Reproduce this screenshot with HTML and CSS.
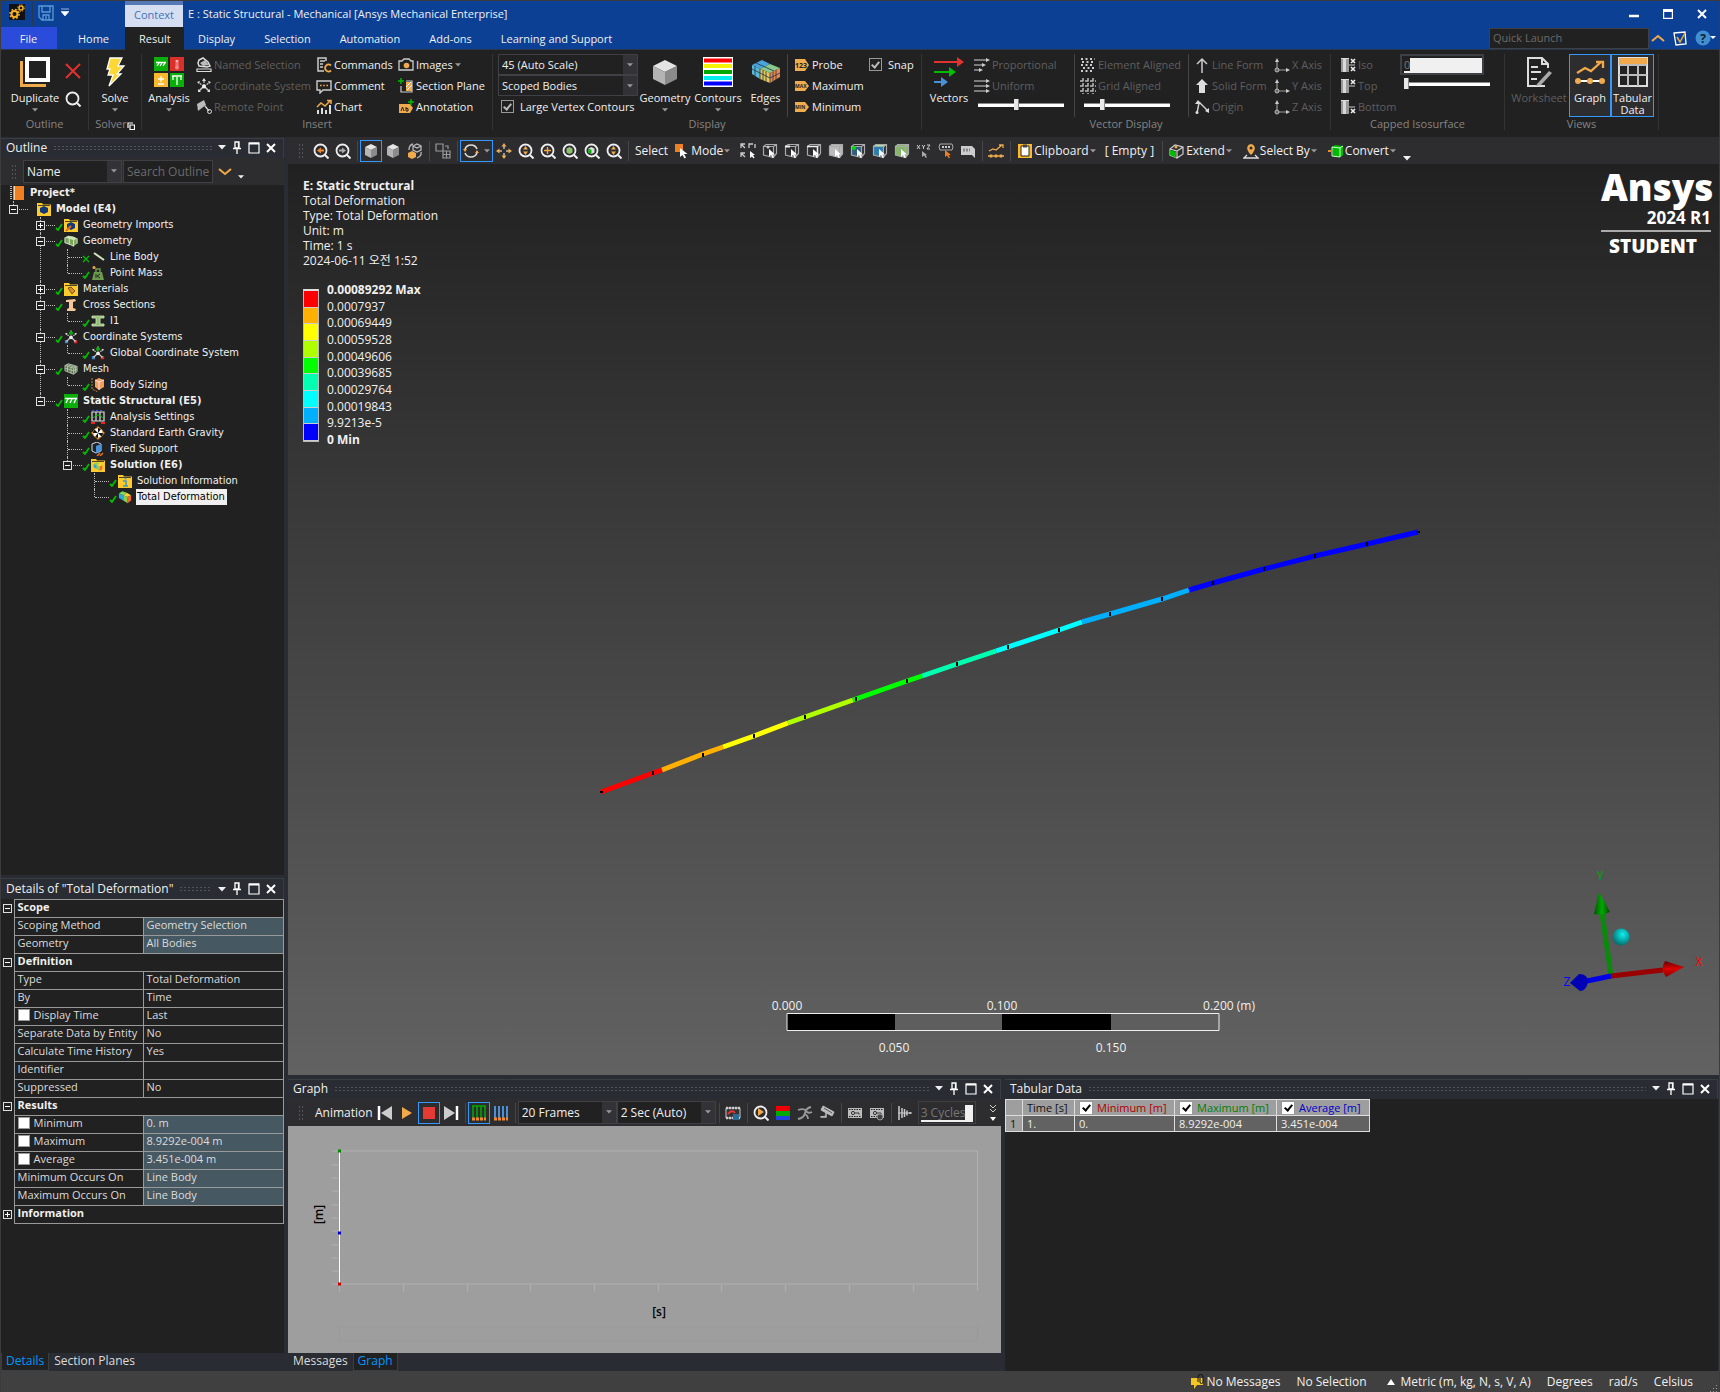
FILE: index.html
```html
<!DOCTYPE html>
<html lang="en">
<head>
    <meta charset="UTF-8">
    <meta name="viewport" content="width=device-width, initial-scale=1.0">
    <title>E : Static Structural - Mechanical [Ansys Mechanical Enterprise]</title>
    <link rel="stylesheet" href="styles.css">
</head>
<body>

    <!-- Shared icons -->
    <svg class="defs" aria-hidden="true">
        <symbol id="down" viewBox="0 0 8 5"><path d="M0 0h8L4 4.5z" fill="currentColor"/></symbol>
        <symbol id="pin" viewBox="0 0 10 14"><path d="M3 1h4v6H3zM1 7.5h8M5 8v5M6.500 1v6" fill="none" stroke="#fff" stroke-width="1.3"/></symbol>
        <symbol id="box" viewBox="0 0 12 12"><path d="M1 1h10v10H1z" fill="none" stroke="#fff" stroke-width="1.2"/><path d="M1 1.5h10" stroke="#fff" stroke-width="2"/></symbol>
        <symbol id="close" viewBox="0 0 10 10"><path d="M1 1l8 8M9 1L1 9" stroke="#fff" stroke-width="2"/></symbol>
        <symbol id="tick" viewBox="0 0 8 8"><path d="M1 5l2 2 4-6" fill="none" stroke="#0b0" stroke-width="1.8"/></symbol>
        <symbol id="lens" viewBox="0 0 16 16"><circle cx="7.5" cy="7.5" r="6" fill="none" stroke="#eee" stroke-width="1.8"/><path d="M12 12l3.500 3.500" stroke="#eee" stroke-width="2"/></symbol>
        <symbol id="cube" viewBox="0 0 16 16"><path d="M8 1l6 3-6 3-6-3z" fill="#e6e6e6"/><path d="M2 4l6 3v8l-6-3z" fill="#b5b5b5"/><path d="M14 4L8 7v8l6-3z" fill="#8b8b8b"/></symbol>
        <symbol id="wire" viewBox="0 0 16 16"><path d="M1.500 3.500L4 1.500h10.500v9L11.500 14M1.500 3.500h10v11L1.500 12zM11.500 3.500l3-2" fill="none" stroke="#aaa" stroke-width="1.2"/></symbol>
        <symbol id="arrow" viewBox="0 0 16 16"><path d="M7 6v8l2-2 1.500 3 1.300-.6L10.500 11.500H13z" fill="#fff"/></symbol>
        <symbol id="folder" viewBox="0 0 14 14"><path d="M0 1h5l1 1.500h8V14H0z" fill="#fdcb2e"/><path d="M1 3.500h12" stroke="#222" stroke-width=".8"/></symbol>
        <symbol id="axes" viewBox="0 0 16 16"><path d="M8 8V2M8 8L3 5M8 8l5-3" stroke="#ccc" stroke-width="1.2" stroke-dasharray="2 1"/><path d="M8 8l-5 5M8 8l5 5" stroke="#ccc" stroke-width="1.5"/><path d="M8 0l2 3H6zM1 4l3-1-1 3zM15 4l-3-1 1 3zM2 11v3h3zM14 11v3h-3z" fill="#ddd"/><circle cx="8" cy="8.500" r="2" fill="#eee"/></symbol>
        <symbol id="axis" viewBox="0 0 16 16"><path d="M3 13V3M3 13h10" stroke="#999" stroke-width="1.2"/><path d="M1 5l2-4 2 4zM12 11l4 2-4 2z" fill="#ccc"/><circle cx="3" cy="13" r="2" fill="#666" stroke="#bbb"/></symbol>
        <symbol id="iso" viewBox="0 0 16 16"><path d="M1 1h8v14H1z" fill="#999"/><path d="M3 1h3v14H3z" fill="#d8d8d8"/><path d="M1 1.500h8" stroke="#ddd"/><path d="M9 8h6" stroke="#ccc"/></symbol>
        <symbol id="cross" viewBox="0 0 6 6"><path d="M1 1l4 4M5 1L1 5" stroke="#eee" stroke-width="1.6"/></symbol>
        <symbol id="film" viewBox="0 0 16 16"><path d="M1 3h14v10H1z" fill="#bdbdbd"/><path d="M2 4.500h12M2 11.500h12" stroke="#222" stroke-width="1.2" stroke-dasharray="1.5 1"/><circle cx="6" cy="8" r="1.6" fill="none" stroke="#333"/><path d="M7.500 8H12v1.500" stroke="#333" fill="none"/></symbol>
        <symbol id="blocks" viewBox="0 0 16 14"><path d="M5 1l6 1 4 2v6l-4 3-4-2-6-2V3z" fill="#7aa35c"/><path d="M1 3l4-2 6 1 4 2-4 2-6-2z" fill="#cde3b8"/><path d="M1 3v6l6 2 4 2V6M6 4v7M15 4v6" stroke="#e5f0dc" fill="none"/></symbol>
        <symbol id="rainbow" viewBox="0 0 16 14"><path d="M1 3l4-2.500 5 1.500-4 3z" fill="#7bdc5a"/><path d="M1 3l5 2v6l-5-3z" fill="#2ea8d8"/><path d="M6 5l4-3 5 3-4 2z" fill="#f5d33b"/><path d="M6 5l5 2v7l-5-3z" fill="#8bd04b"/><path d="M11 7l4-2v6l-4 3z" fill="#ee6a2c"/></symbol>
    </svg>

    <!-- Title bar -->
    <header class="titlebar">
        <svg class="app-icon" viewBox="0 0 16 16"><path d="M0 0h16v16H0z" fill="#111"/><circle cx="5.500" cy="10" r="3" fill="none" stroke="#f3b229" stroke-width="2"/><circle cx="5.500" cy="10" r="4.600" fill="none" stroke="#f3b229" stroke-width="1.5" stroke-dasharray="1.8 1.8"/><circle cx="12" cy="4" r="2" fill="none" stroke="#f3b229" stroke-width="1.5"/><circle cx="12" cy="4" r="3.300" fill="none" stroke="#f3b229" stroke-dasharray="1.3 1.3"/></svg>
        <button class="save" aria-label="Save"><svg width="16" height="16" viewBox="0 0 16 16"><path d="M1 1h14v14H4l-3-3zM4 1v6h8V1M5 15v-5h6v5M8 11v3" fill="none" stroke="#5b9bd9" stroke-width="1.3"/></svg></button>
        <button class="customize" aria-label="Customize"><svg width="8" height="8" viewBox="0 0 8 8"><path d="M0 1h8M0 3.500h8L4 8z" fill="#fff" stroke="#fff" stroke-width=".6"/></svg></button>
        <div class="context">Context</div>
        <div class="title">E : Static Structural - Mechanical [Ansys Mechanical Enterprise]</div>
        <div class="window-buttons">
            <button aria-label="Minimize"><svg width="10" height="12" viewBox="0 0 10 12"><path d="M0 8h10" stroke="#fff" stroke-width="2.5"/></svg></button>
            <button aria-label="Maximize"><svg width="10" height="10" viewBox="0 0 10 10"><path d="M.6 1h8.800v8.400H.6z" fill="none" stroke="#fff" stroke-width="1.2"/><path d="M0 1.500h10" stroke="#fff" stroke-width="3"/></svg></button>
            <button aria-label="Close"><svg width="10" height="10"><use href="#close"/></svg></button>
        </div>
    </header>

    <nav class="tabs">
        <a href="#" class="file">File</a>
        <a href="#" class="home">Home</a>
        <a href="#" class="active">Result</a>
        <a href="#">Display</a>
        <a href="#">Selection</a>
        <a href="#">Automation</a>
        <a href="#">Add-ons</a>
        <a href="#">Learning and Support</a>
        <div class="quick">
            <input type="text" placeholder="Quick Launch" aria-label="Quick Launch">
            <button aria-label="Collapse ribbon"><svg width="14" height="8" viewBox="0 0 14 8"><path d="M1 7l6-5 6 5" fill="none" stroke="#f0a94b" stroke-width="2"/></svg></button>
            <button aria-label="Options"><svg width="16" height="16" viewBox="0 0 16 16"><path d="M2 3l11-1 1 12-10 1z" fill="none" stroke="#fff" stroke-width="1.3"/><path d="M5 7l3 5 5-9" fill="none" stroke="#f0a94b" stroke-width="1.5"/></svg></button>
            <button aria-label="Help"><svg width="21" height="16" viewBox="0 0 21 16"><circle cx="8" cy="8" r="7.500" fill="#3f8fd2"/><text x="8" y="12.500" text-anchor="middle" class="help-mark">?</text><path d="M15 6h6l-3 3z" fill="#fff"/></svg></button>
        </div>
    </nav>

    <!-- Ribbon -->
    <section class="ribbon">
        <div class="group">
            <div class="group-body g-outline">
                <button class="big w60"><svg width="30" height="30" viewBox="0 0 30 30"><path d="M1.500 4v24.500H26" fill="none" stroke="#f0a94b" stroke-width="3"/><path d="M7 2h21v21H7z" fill="none" stroke="#fff" stroke-width="4"/></svg><span>Duplicate</span><svg class="caret"><use href="#down"/></svg></button>
                <div class="tall">
                    <button aria-label="Delete"><svg width="16" height="16" viewBox="0 0 16 16"><path d="M1 1l14 14M15 1L1 15" stroke="#e2322d" stroke-width="2"/></svg></button>
                    <button aria-label="Find"><svg width="16" height="16"><use href="#lens"/></svg></button>
                </div>
            </div>
            <div class="group-name">Outline</div>
        </div>
        <div class="group">
            <div class="group-body">
                <button class="big w52"><svg width="30" height="30" viewBox="0 0 30 30"><path d="M10 1h12l-4 8h6l-7 8h4L9 29l4-11H8l2-6H7z" fill="#fdd835" stroke="#fff" stroke-width="1.3"/></svg><span>Solve</span><svg class="caret"><use href="#down"/></svg></button>
            </div>
            <div class="group-name">Solver<svg class="launcher" viewBox="0 0 8 8"><path d="M1 6V1h5M3 3h4.500v4.500H3z" fill="none" stroke="#fff" stroke-width="1.2"/></svg></div>
        </div>
        <div class="group">
            <div class="group-body">
                <button class="big w54"><svg width="30" height="30" viewBox="0 0 30 30"><path d="M0 0h14v14H0zM16 16h14v14H16z" fill="#0aaf0a"/><path d="M16 0h14v14H16z" fill="#d9302a"/><path d="M0 16h14v14H0z" fill="#fbb92d"/><path d="M2 5.500h10M5 6L3 9M8 6L6 9M11 6L9 9M23 20v8M19 19v4M27 19v4M18 19h10M7 19v6M4 22h6M4 27h6" stroke="#fff" stroke-width="1.3"/><path d="M23 3v6" stroke="#fbb" stroke-width="2.6"/><path d="M23 5v5" stroke="#d9302a"/><circle cx="23" cy="10.500" r="2" fill="#e88"/></svg><span>Analysis</span><svg class="caret"><use href="#down"/></svg></button>
                <div class="col w120">
                    <button class="small" disabled><svg class="icon" viewBox="0 0 16 16"><path d="M3 3l4-2 5 4 2 4-3 1-8-1-1-3z" fill="none" stroke="#ddd" stroke-width="1.5"/><path d="M4 6l5-3 4 5-6 1z" fill="#bbb"/><path d="M1 12h14v2.500H1z" fill="none" stroke="#ddd" stroke-width="1.2"/></svg>Named Selection</button>
                    <button class="small" disabled><svg class="icon"><use href="#axes"/></svg>Coordinate System</button>
                    <button class="small" disabled><svg class="icon" viewBox="0 0 16 16"><path d="M1 5l7-4 2 5-8 6z" fill="#bbb"/><path d="M9 7l4 5" stroke="#ccc" stroke-width="1.5"/><circle cx="13.500" cy="12.500" r="2" fill="none" stroke="#ddd"/></svg>Remote Point</button>
                </div>
                <div class="col w82">
                    <button class="small"><svg class="icon" viewBox="0 0 16 16"><path d="M10 4V1H2v13h6M4 4h5M4 7h3M4 10h3" fill="none" stroke="#ccc" stroke-width="1.5"/><path d="M15 8.500a3.500 3.500 0 1 0 0 5" fill="none" stroke="#f0a94b" stroke-width="1.8"/></svg>Commands</button>
                    <button class="small"><svg class="icon" viewBox="0 0 16 16"><path d="M1 3h14v9H7l-3 3v-3H1z" fill="none" stroke="#ccc" stroke-width="1.4"/><path d="M4 7.500h9" stroke="#f0a94b" stroke-width="1.6" stroke-dasharray="1.6 1.6"/></svg>Comment</button>
                    <button class="small"><svg class="icon" viewBox="0 0 16 16"><path d="M2 15v-4M6 15V9M10 15v-4M14 15V6" stroke="#ddd" stroke-width="2"/><path d="M1 8l4-4 4 3 5-5M11 1.500h4V5" fill="none" stroke="#f0a94b" stroke-width="1.5"/></svg>Chart</button>
                </div>
                <div class="col w94">
                    <button class="small"><svg class="icon" viewBox="0 0 16 16"><path d="M1 4h3l2-2h5l2 2h2v9H1z" fill="none" stroke="#ccc" stroke-width="1.3"/><circle cx="8.500" cy="8.500" r="2.800" fill="#f0a94b"/></svg>Images<svg class="caret"><use href="#down"/></svg></button>
                    <button class="small"><svg class="icon" viewBox="0 0 16 16"><path d="M3 0v6M0 3h6" stroke="#0b0" stroke-width="1.5"/><path d="M3 8v6h11V3H8" fill="none" stroke="#ccc" stroke-width="1.2"/><path d="M8 4h6v9H8z" fill="#f0a94b"/><path d="M8 9l5-5M9 12l5-5" stroke="#fff"/></svg>Section Plane</button>
                    <button class="small"><svg class="icon" viewBox="0 0 16 16"><path d="M1 5h11l3 4-3 5H1z" fill="#f0a94b"/><path d="M3 12l1.500-4L6 12M8 8v4h2V9.500H8" stroke="#222" fill="none"/><path d="M13 0v6M10 3h6" stroke="#0b0" stroke-width="1.5"/></svg>Annotation</button>
                </div>
            </div>
            <div class="group-name">Insert</div>
        </div>
        <div class="group">
            <div class="group-body g-display">
                <div class="col w140">
                    <div class="combo"><select aria-label="Scale"><option>45 (Auto Scale)</option></select><svg class="caret"><use href="#down"/></svg></div>
                    <div class="combo"><select aria-label="Scope"><option>Scoped Bodies</option></select><svg class="caret"><use href="#down"/></svg></div>
                    <label class="check"><input type="checkbox" checked>Large Vertex Contours</label>
                </div>
                <button class="big w52"><svg width="30" height="30" viewBox="0 0 30 30"><path d="M15 3l12 6-12 6L3 9z" fill="#e4e4e4"/><path d="M3 9l12 6v13L3 22z" fill="#b4b4b4"/><path d="M27 9l-12 6v13l12-6z" fill="#8a8a8a"/></svg><span>Geometry</span><svg class="caret"><use href="#down"/></svg></button>
                <button class="big w52"><svg width="30" height="30" viewBox="0 0 30 30"><path d="M0 0h30v30H0z" fill="#fff"/><path d="M1 1.500h28v4H1z" fill="#f00"/><path d="M1 7h28v4H1z" fill="#f4f400"/><path d="M1 13h28v4H1z" fill="#0a0"/><path d="M1 19h28v4H1z" fill="#0ee"/><path d="M1 24.500h28v4H1z" fill="#00f"/></svg><span>Contours</span><svg class="caret"><use href="#down"/></svg></button>
                <button class="big w41"><svg width="30" height="30" viewBox="0 0 30 30"><path d="M1 8l10-5 8 4-10 5z" fill="#4aa3dd"/><path d="M1 8l8 4v10l-8-5z" fill="#58b9d6"/><path d="M9 12l10-5 10 4-10 5z" fill="#8bc88c"/><path d="M9 12l10 4v10L9 22z" fill="#e5c95b"/><path d="M19 16l10-5v9l-10 6z" fill="#e88a4e"/><path d="M4 9v10M12 13v10M15 14.500v10M22 15v10M25 13v10M1 12l18 9 10-5M5 6l18 8M9 12v10M19 16v10" fill="none" stroke="#234" stroke-width=".8"/></svg><span>Edges</span><svg class="caret"><use href="#down"/></svg></button>
                <div class="inner-sep"></div>
                <div class="col w74">
                    <button class="small"><svg class="icon" viewBox="0 0 16 16"><path d="M1 2h10l4 6-4 6H1z" fill="#f0ad4e"/><text x="1" y="11" class="tag-text">123</text></svg>Probe</button>
                    <button class="small"><svg class="icon" viewBox="0 0 16 16"><path d="M1 3h10l4 5-4 5H1z" fill="#f0ad4e"/><text x="1" y="10" class="tag-text tiny">MAX</text></svg>Maximum</button>
                    <button class="small"><svg class="icon" viewBox="0 0 16 16"><path d="M1 3h10l4 5-4 5H1z" fill="#f0ad4e"/><text x="1" y="10" class="tag-text tiny">MIN</text></svg>Minimum</button>
                </div>
                <div class="col w48"><label class="check"><input type="checkbox" checked>Snap</label></div>
            </div>
            <div class="group-name">Display</div>
        </div>
        <div class="group">
            <div class="group-body g-vector">
                <button class="big w50"><svg width="30" height="30" viewBox="0 0 30 30"><path d="M0 5h24" stroke="#e2322d" stroke-width="2"/><path d="M23 0l7 5-7 5z" fill="#e2322d"/><path d="M0 15h16" stroke="#0b0" stroke-width="2"/><path d="M15 10l7 5-7 5z" fill="#0b0"/><path d="M0 25h8" stroke="#4a90d9" stroke-width="2"/><path d="M7 20l7 5-7 5z" fill="#4a90d9"/></svg><span>Vectors</span></button>
                <div class="col w100">
                    <button class="small" disabled><svg class="icon" viewBox="0 0 16 16"><path d="M0 3h13M0 8h9M0 13h6" stroke="#999" stroke-width="1.5"/><path d="M12 1l4 2-4 2zM8 6l4 2-4 2zM5 11l4 2-4 2z" fill="#ccc"/></svg>Proportional</button>
                    <button class="small" disabled><svg class="icon" viewBox="0 0 16 16"><path d="M0 3h13M0 8h13M0 13h13" stroke="#999" stroke-width="1.5"/><path d="M12 1l4 2-4 2zM12 6l4 2-4 2zM12 11l4 2-4 2z" fill="#ccc"/></svg>Uniform</button>
                    <input type="range" value="44" aria-label="Vector length">
                </div>
                <div class="inner-sep"></div>
                <div class="col w108">
                    <button class="small" disabled><svg class="icon" viewBox="0 0 16 16"><path d="M1 2h14M2 5h12M1 8h13M3 11h12M1 14h12" stroke="#ccc" stroke-width="2" stroke-dasharray="2 2.5"/></svg>Element Aligned</button>
                    <button class="small" disabled><svg class="icon" viewBox="0 0 16 16"><path d="M0 3h16M0 8h16M0 13h16M3 0v16M8 0v16M13 0v16" stroke="#bbb" stroke-width="1.5" stroke-dasharray="3.5 1.5"/></svg>Grid Aligned</button>
                    <input type="range" value="20" aria-label="Grid density">
                </div>
                <div class="inner-sep"></div>
                <div class="col w80">
                    <button class="small" disabled><svg class="icon" viewBox="0 0 16 16"><path d="M8 16V2M3 7l5-5 5 5" fill="none" stroke="#ccc" stroke-width="1.5"/></svg>Line Form</button>
                    <button class="small" disabled><svg class="icon" viewBox="0 0 16 16"><path d="M8 1l6 6h-3v8H5V7H2z" fill="#ddd"/></svg>Solid Form</button>
                    <button class="small" disabled><svg class="icon" viewBox="0 0 16 16"><path d="M3 14L5 4M5 3l8 8" stroke="#ccc" stroke-width="1.5"/><path d="M1 5l3-4 3 4zM11 12l4-3v5z" fill="#ddd"/><circle cx="3" cy="13.500" r="1.500" fill="#ddd"/></svg>Origin</button>
                </div>
                <div class="col w56">
                    <button class="small" disabled><svg class="icon"><use href="#axis"/></svg>X Axis</button>
                    <button class="small" disabled><svg class="icon"><use href="#axis"/></svg>Y Axis</button>
                    <button class="small" disabled><svg class="icon"><use href="#axis"/></svg>Z Axis</button>
                </div>
            </div>
            <div class="group-name">Vector Display</div>
        </div>
        <div class="group">
            <div class="group-body g-capped">
                <div class="col w60">
                    <button class="small" disabled><svg class="icon" viewBox="0 0 16 16"><use href="#iso" width="16" height="16"/><use href="#cross" x="10" y="1" width="6" height="6"/><use href="#cross" x="10" y="9" width="6" height="6"/></svg>Iso</button>
                    <button class="small" disabled><svg class="icon" viewBox="0 0 16 16"><use href="#iso" width="16" height="16"/><use href="#cross" x="10" y="1" width="6" height="6"/></svg>Top</button>
                    <button class="small" disabled><svg class="icon" viewBox="0 0 16 16"><use href="#iso" width="16" height="16"/><use href="#cross" x="10" y="9" width="6" height="6"/></svg>Bottom</button>
                </div>
                <div class="col w92">
                    <div class="iso-value"><input type="text" value="0" aria-label="Isosurface value"></div>
                    <input type="range" class="iso-range" value="0" aria-label="Isosurface position">
                </div>
            </div>
            <div class="group-name">Capped Isosurface</div>
        </div>
        <div class="group">
            <div class="group-body g-views">
                <button class="big w60 off" disabled><svg width="30" height="30" viewBox="0 0 30 30"><path d="M21 29H4V1h14l6 6v4M18 1v6h6M7 10h7M7 15h10M7 22h6" fill="none" stroke="#ddd" stroke-width="2"/><path d="M13 27l12-13 3 2-11 12-5 1z" fill="#aaa"/></svg><span>Worksheet</span></button>
                <button class="big w42 on"><svg width="30" height="30" viewBox="0 0 30 30"><path d="M2 16l8-5 6 3 10-9M21 5h7v6" fill="none" stroke="#f0a94b" stroke-width="2.3"/><path d="M3 24h24" stroke="#fff" stroke-width="2"/><circle cx="3" cy="24" r="3" fill="#f0a94b"/><circle cx="15" cy="24" r="3" fill="#f0a94b"/><circle cx="27" cy="24" r="3" fill="#f0a94b"/></svg><span>Graph</span></button>
                <button class="big w43 on"><svg width="30" height="30" viewBox="0 0 30 30"><path d="M1 1h28v28H1z" fill="#222" stroke="#ddd" stroke-width="2"/><path d="M1 1h28v6H1z" fill="#f0a94b"/><path d="M1 8h28M1 18h28M10 8v21M20 8v21" stroke="#bbb" stroke-width="2"/></svg><span>Tabular<br>Data</span></button>
            </div>
            <div class="group-name">Views</div>
        </div>
    </section>

    <main class="workspace">
        <!-- Left docks -->
        <aside class="left">
            <section class="dock tree-dock">
                <div class="dock-head"><h2>Outline</h2><i class="dots"></i><button aria-label="Menu"><svg width="8" height="5"><use href="#down"/></svg></button><button aria-label="Pin"><svg width="10" height="14"><use href="#pin"/></svg></button><button aria-label="Maximize"><svg width="12" height="12"><use href="#box"/></svg></button><button aria-label="Close"><svg width="10" height="10"><use href="#close"/></svg></button></div>
                <div class="filter">
                    <i class="grip"></i>
                    <div class="combo w99"><select aria-label="Filter by"><option>Name</option></select><svg class="caret"><use href="#down"/></svg></div>
                    <input type="text" placeholder="Search Outline" aria-label="Search Outline">
                    <button aria-label="Expand"><svg width="14" height="8" viewBox="0 0 14 8"><path d="M1 1l6 5 6-5" fill="none" stroke="#f0a94b" stroke-width="2"/></svg></button>
                    <button class="low" aria-label="More"><svg width="6" height="4"><use href="#down"/></svg></button>
                </div>
                <div class="tree">
                    <div class="project"><svg width="14" height="14" viewBox="0 0 14 14"><path d="M3 0h11v14H3z" fill="#ee7f22"/><path d="M4.500 0v14" stroke="#fbd0a0"/><path d="M1 0v14" stroke="#bbb" stroke-width="2" stroke-dasharray="1 1"/></svg><b>Project*</b></div>
                    <ul class="root">
                        <li><div class="row bold"><i class="exp minus"></i><i class="state"></i><svg class="ti" viewBox="0 0 14 14"><use href="#folder"/><path d="M7 4l4 2v4l-4 2-4-2V6z" fill="#123a7a"/></svg>Model (E4)</div>
                            <ul>
                                <li><div class="row"><i class="exp plus"></i><svg class="state"><use href="#tick"/></svg><svg class="ti" viewBox="0 0 14 14"><use href="#folder"/><path d="M7 4l4 2v4l-4 2-4-2V6z" fill="#123a7a"/><path d="M2 13l5-5" stroke="#e07020" stroke-width="2"/></svg>Geometry Imports</div></li>
                                <li><div class="row"><i class="exp minus"></i><svg class="state"><use href="#tick"/></svg><svg class="ti"><use href="#blocks"/></svg>Geometry</div>
                                    <ul>
                                        <li><div class="row leaf"><i class="exp"></i><svg class="state" viewBox="0 0 8 8"><path d="M1 1l6 6M7 1L1 7" stroke="#0b0" stroke-width="1.3"/></svg><svg class="ti" viewBox="0 0 14 14"><path d="M3 3l10 7" stroke="#cfe6c0" stroke-width="2"/></svg>Line Body</div></li>
                                        <li><div class="row leaf"><i class="exp"></i><svg class="state"><use href="#tick"/></svg><svg class="ti" viewBox="0 0 14 14"><path d="M3 6h8l2 8H1z" fill="#6c9a4f"/><path d="M5 6V3h4v3" stroke="#6c9a4f" stroke-width="1.5" fill="none"/><circle cx="3" cy="1.500" r="1.500" fill="#f0a94b"/><path d="M5 8v4M9 8l-3 2 3 2" stroke="#222" fill="none"/></svg>Point Mass</div></li>
                                    </ul>
                                </li>
                                <li><div class="row"><i class="exp plus"></i><svg class="state"><use href="#tick"/></svg><svg class="ti" viewBox="0 0 14 14"><use href="#folder"/><path d="M4 6l3-1 4 4-3 3z" fill="#e58a20" stroke="#222" stroke-width=".6"/></svg>Materials</div></li>
                                <li><div class="row"><i class="exp minus"></i><svg class="state"><use href="#tick"/></svg><svg class="ti" viewBox="0 0 14 14"><path d="M2 2l9-1 1 2-3 1v6l3 1-1 2H3v-2l2-1V4H2z" fill="#f3c79a"/></svg>Cross Sections</div>
                                    <ul><li><div class="row leaf"><i class="exp"></i><svg class="state"><use href="#tick"/></svg><svg class="ti" viewBox="0 0 14 14"><path d="M1 2h12v2H9v6h4v2H1v-2h4V4H1z" fill="#8fbf70" stroke="#d5eac5" stroke-width=".8"/></svg>I1</div></li></ul>
                                </li>
                                <li><div class="row"><i class="exp minus"></i><svg class="state"><use href="#tick"/></svg><svg class="ti" viewBox="0 0 16 16"><use href="#axes"/><path d="M8 0l3 5H5z" fill="#0a0"/><path d="M1 11v4h4z" fill="#3a8be0"/><path d="M15 11v4h-4z" fill="#e22"/></svg>Coordinate Systems</div>
                                    <ul><li><div class="row leaf"><i class="exp"></i><svg class="state"><use href="#tick"/></svg><svg class="ti" viewBox="0 0 16 16"><use href="#axes"/><path d="M8 0l3 5H5z" fill="#0a0"/><path d="M1 11v4h4z" fill="#3a8be0"/><path d="M15 11v4h-4z" fill="#e22"/></svg>Global Coordinate System</div></li></ul>
                                </li>
                                <li><div class="row"><i class="exp minus"></i><svg class="state"><use href="#tick"/></svg><svg class="ti" viewBox="0 0 16 14"><path d="M5 1l6 1 4 2v6l-4 3-10-4V3z" fill="#5b7350"/><path d="M1 3l4-2 10 3-4 2zM1 3v6l10 4V6M4 4v6M8 5v7M1 6l10 3 4-2M15 4v6l-4 3M3 2l10 3v6" fill="none" stroke="#cfd8c8" stroke-width=".8"/></svg>Mesh</div>
                                    <ul><li><div class="row leaf"><i class="exp"></i><svg class="state"><use href="#tick"/></svg><svg class="ti" viewBox="0 0 14 14"><path d="M8 0l5 2v7l-5 3-4-3V2z" fill="#f0a05a"/><path d="M4 2l4 2 5-2M8 4v8" stroke="#fde" fill="none"/><path d="M1 0v11l6 3" stroke="#c77b2c" fill="none" stroke-dasharray="2 1"/></svg>Body Sizing</div></li></ul>
                                </li>
                                <li><div class="row bold"><i class="exp minus"></i><svg class="state"><use href="#tick"/></svg><svg class="ti" viewBox="0 0 14 14"><path d="M0 0h14v14H0z" fill="#0aaf0a"/><path d="M1 4.500h12M4 5L2 9M8 5L6 9M12 5l-2 4" stroke="#fff" stroke-width="1.4"/></svg>Static Structural (E5)</div>
                                    <ul>
                                        <li><div class="row leaf"><i class="exp"></i><svg class="state"><use href="#tick"/></svg><svg class="ti" viewBox="0 0 14 14"><path d="M1 2h12v9H1zM5 2v9M9 2v9" fill="none" stroke="#ddd" stroke-width="1.2"/><path d="M1 0h12" stroke="#35f" stroke-dasharray="2 2" stroke-width="2"/><path d="M2 8q5-6 10 0" stroke="#0b0" fill="none"/><path d="M0 13h4M10 13h4" stroke="#e22" stroke-width="2"/></svg>Analysis Settings</div></li>
                                        <li><div class="row leaf"><i class="exp"></i><svg class="state"><use href="#tick"/></svg><svg class="ti" viewBox="0 0 14 14"><path d="M7 0l2 2.500H5zM7 14l2-2.500H5zM0 7l2.500-2v4zM14 7l-2.500-2v4z" fill="#e58a20"/><circle cx="7" cy="7" r="5" fill="#fff" stroke="#e58a20" stroke-width=".8"/><path d="M7 7L3.500 3.500A5 5 0 0 0 2 7zM7 7l3.500 3.500A5 5 0 0 0 12 7zM7 7V2l3 1zM7 7v5l-3-1z" fill="#111"/></svg>Standard Earth Gravity</div></li>
                                        <li><div class="row leaf"><i class="exp"></i><svg class="state"><use href="#tick"/></svg><svg class="ti" viewBox="0 0 14 14"><path d="M1 2l5-2 4 2v7l-5 2-4-2z" fill="#222" stroke="#cde"/><path d="M5 4l5-2v7l-5 2z" fill="#4a90d9"/><path d="M6 14l3-3M9 14l3-3" stroke="#e07020" stroke-width="1.5"/></svg>Fixed Support</div></li>
                                        <li><div class="row bold"><i class="exp minus"></i><svg class="state"><use href="#tick"/></svg><svg class="ti" viewBox="0 0 14 14"><use href="#folder"/><use href="#rainbow" x="2" y="4" width="10" height="9"/></svg>Solution (E6)</div>
                                            <ul>
                                                <li><div class="row leaf"><i class="exp"></i><svg class="state"><use href="#tick"/></svg><svg class="ti" viewBox="0 0 14 14"><use href="#folder"/><path d="M5 7h3v5M5 12h5M6.500 4.500h2" stroke="#3a9bd0" stroke-width="1.5" fill="none"/></svg>Solution Information</div></li>
                                                <li><div class="row leaf"><i class="exp"></i><svg class="state"><use href="#tick"/></svg><svg class="ti"><use href="#rainbow"/></svg><span class="selected">Total Deformation</span></div></li>
                                            </ul>
                                        </li>
                                    </ul>
                                </li>
                            </ul>
                        </li>
                    </ul>
                </div>
            </section>

            <section class="dock details-dock">
                <div class="dock-head"><h2>Details of "Total Deformation"</h2><i class="dots"></i><button aria-label="Menu"><svg width="8" height="5"><use href="#down"/></svg></button><button aria-label="Pin"><svg width="10" height="14"><use href="#pin"/></svg></button><button aria-label="Maximize"><svg width="12" height="12"><use href="#box"/></svg></button><button aria-label="Close"><svg width="10" height="10"><use href="#close"/></svg></button></div>
                <table class="details">
                    <colgroup><col class="c-gut"><col class="c-name"><col></colgroup>
                    <tr><td class="gut"><i class="exp minus"></i></td><th colspan="2">Scope</th></tr>
                    <tr><td class="gut"></td><td>Scoping Method</td><td class="ro">Geometry Selection</td></tr>
                    <tr><td class="gut"></td><td>Geometry</td><td class="ro">All Bodies</td></tr>
                    <tr><td class="gut"><i class="exp minus"></i></td><th colspan="2">Definition</th></tr>
                    <tr><td class="gut"></td><td>Type</td><td>Total Deformation</td></tr>
                    <tr><td class="gut"></td><td>By</td><td>Time</td></tr>
                    <tr><td class="gut"></td><td><label><input type="checkbox">Display Time</label></td><td>Last</td></tr>
                    <tr><td class="gut"></td><td>Separate Data by Entity</td><td>No</td></tr>
                    <tr><td class="gut"></td><td>Calculate Time History</td><td>Yes</td></tr>
                    <tr><td class="gut"></td><td>Identifier</td><td></td></tr>
                    <tr><td class="gut"></td><td>Suppressed</td><td>No</td></tr>
                    <tr><td class="gut"><i class="exp minus"></i></td><th colspan="2">Results</th></tr>
                    <tr><td class="gut"></td><td><label><input type="checkbox">Minimum</label></td><td class="ro">0. m</td></tr>
                    <tr><td class="gut"></td><td><label><input type="checkbox">Maximum</label></td><td class="ro">8.9292e-004 m</td></tr>
                    <tr><td class="gut"></td><td><label><input type="checkbox">Average</label></td><td class="ro">3.451e-004 m</td></tr>
                    <tr><td class="gut"></td><td>Minimum Occurs On</td><td class="ro">Line Body</td></tr>
                    <tr><td class="gut"></td><td>Maximum Occurs On</td><td class="ro">Line Body</td></tr>
                    <tr><td class="gut"><i class="exp plus"></i></td><th colspan="2">Information</th></tr>
                </table>
            </section>
            <nav class="dock-tabs"><a href="#" class="active">Details</a><a href="#">Section Planes</a></nav>
        </aside>

        <div class="right">
            <!-- Graphics toolbar -->
            <div class="toolbar">
                <i class="grip"></i>
                <button aria-label="Previous view"><svg class="icon" viewBox="0 0 16 16"><use href="#lens"/><path d="M4 7.500l4-3v2h3v2H8v2z" fill="#f08a2c"/></svg></button>
                <button aria-label="Next view"><svg class="icon" viewBox="0 0 16 16"><use href="#lens"/><path d="M11 7.500l-4-3v2H4v2h3v2z" fill="#aaa"/></svg></button>
                <i class="sep"></i>
                <button class="on" aria-label="Shaded edges"><svg class="icon"><use href="#cube"/></svg></button>
                <button aria-label="Shaded"><svg class="icon"><use href="#cube"/></svg></button>
                <button aria-label="Explode"><svg class="icon" viewBox="0 0 16 16"><path d="M6 3l4-2 4 2v4l-4 2-4-2zM6 3l4 2 4-2M2 7q0-5 4-6M14 9q1 4-4 6" fill="none" stroke="#bbb" stroke-width="1.3"/><path d="M1 10l4-2 4 2v4l-4 2-4-2z" fill="#f0a94b"/></svg></button>
                <i class="sep"></i>
                <button aria-label="Rescale"><svg class="icon" viewBox="0 0 16 16"><path d="M1 1h7v7H1zM8 8h7v7H8zM11.500 8v7M8 11.500h7M10 3h3v3" fill="none" stroke="#999" stroke-width="1.2"/></svg></button>
                <i class="sep"></i>
                <button class="on wide" aria-label="Rotate"><svg class="icon" viewBox="0 0 16 16"><path d="M2 6a6.500 6.500 0 0 1 12 0M14 10a6.500 6.500 0 0 1-12 0" fill="none" stroke="#ddd" stroke-width="1.6"/><path d="M0 6h4L2 9zM12 10h4l-2-3z" fill="#f0a94b"/></svg><svg class="caret"><use href="#down"/></svg></button>
                <button aria-label="Pan"><svg class="icon" viewBox="0 0 16 16"><path d="M8 3v3M8 10v3M3 8h3M10 8h3" stroke="#bbb" stroke-width="1.5"/><path d="M8 0l2.500 3.500h-5zM8 16l2.500-3.500h-5zM0 8l3.500-2.500v5zM16 8l-3.500-2.500v5z" fill="#f0a94b"/></svg></button>
                <button aria-label="Zoom"><svg class="icon" viewBox="0 0 16 16"><use href="#lens"/><path d="M7.500 3l2.500 3.500H5zM7.500 12L10 8.500H5z" fill="#f0a94b"/></svg></button>
                <button aria-label="Box zoom"><svg class="icon" viewBox="0 0 16 16"><use href="#lens"/><path d="M7.500 4v7M4 7.500h7" stroke="#f0a94b" stroke-width="1.5"/></svg></button>
                <button aria-label="Zoom to fit"><svg class="icon" viewBox="0 0 16 16"><use href="#lens"/><path d="M7.500 4l3 1.500v4l-3 1.500-3-1.500v-4z" fill="#8fbf70"/></svg></button>
                <button aria-label="Zoom to selection"><svg class="icon" viewBox="0 0 16 16"><use href="#lens"/><path d="M7.500 4l3 1.500v4l-3 1.500-3-1.500v-4z" fill="#ddd"/><path d="M4.500 5.500l3 1.500v4l-3-1.500z" fill="#0b0"/></svg></button>
                <button aria-label="Magnifier"><svg class="icon" viewBox="0 0 16 16"><use href="#lens"/><path d="M7.500 3L10 6.500H5zM7.500 12L10 8.500H5z" fill="#f0a94b"/></svg></button>
                <i class="sep"></i>
                <span class="label">Select</span>
                <button class="text"><svg class="icon" viewBox="0 0 16 16"><path d="M1 1h8v8H1z" fill="#ee7f22"/><path d="M6 5v9l2.500-2 2 3.500 1.500-1-2-3.500h3.500z" fill="#fff"/></svg>Mode<svg class="caret"><use href="#down"/></svg></button>
                <button aria-label="Smart select"><svg class="icon" viewBox="0 0 16 16"><path d="M1 5V1h4M1 1l4 4M9 5V1h4M15 1v4M1 14v-4h4M1 10l4 4" stroke="#ccc" stroke-width="1.3" fill="none"/><path d="M10 8v7l2-1.500 1.500 2 1-1L13 12h2z" fill="#fff"/></svg></button>
                <button aria-label="Vertex"><svg class="icon" viewBox="0 0 16 16"><use href="#wire"/><circle cx="6" cy="4" r="1.500" fill="#ccc"/><use href="#arrow"/></svg></button>
                <button aria-label="Edge"><svg class="icon" viewBox="0 0 16 16"><use href="#wire"/><path d="M1 3.500h5" stroke="#eee" stroke-width="2"/><use href="#arrow"/></svg></button>
                <button aria-label="Face"><svg class="icon" viewBox="0 0 16 16"><use href="#wire"/><path d="M1 3.500h10.500v10" stroke="#eee" stroke-width="1.5" fill="none"/><use href="#arrow"/></svg></button>
                <button aria-label="Body"><svg class="icon" viewBox="0 0 16 16"><path d="M1 3l3-2h11v10l-3 4-11-3z" fill="#bbb"/><use href="#wire"/><use href="#arrow"/></svg></button>
                <button aria-label="Node"><svg class="icon" viewBox="0 0 16 16"><path d="M2 4h9v9H2z" fill="#2f5d83"/><use href="#wire"/><circle cx="4" cy="5" r="2" fill="#0d0"/><use href="#arrow"/></svg></button>
                <button aria-label="Element face"><svg class="icon" viewBox="0 0 16 16"><path d="M2 4h9v10l-9-2z" fill="#2b7fb0"/><path d="M1 3l3-2h11l-3 3z" fill="#a6e0a8"/><use href="#wire"/><use href="#arrow"/></svg></button>
                <button aria-label="Element"><svg class="icon" viewBox="0 0 16 16"><path d="M1 3l3-2h11v10l-3 4-11-3z" fill="#85b56a"/><use href="#wire"/><use href="#arrow"/></svg></button>
                <button aria-label="Coordinates"><svg class="icon" viewBox="0 0 16 16"><path d="M1 2l3 4M4 2L1 6M6 2l1.500 2L9 2M7.500 4v2M11 2h3l-3 4h3" stroke="#ccc" fill="none"/><path d="M6 8v6l2-1.500L10 15l1-1-1.500-2H11z" fill="#aaa"/></svg></button>
                <button aria-label="Probe label"><svg class="icon" viewBox="0 0 16 16"><path d="M2 1h12l1 3-1 3H2L1 4z" fill="none" stroke="#aaa"/><path d="M4 4h8" stroke="#ccc" stroke-dasharray="2 1" stroke-width="2"/><path d="M7 7v7l2-1.500 2 3 1-1-1.500-2.500H13z" fill="#ee7f22"/></svg></button>
                <button aria-label="Label"><svg class="icon" viewBox="0 0 16 16"><path d="M1 3h11l3 3v9l-3-3H1z" fill="#ccc"/><path d="M3 7h7" stroke="#888" stroke-width="3" stroke-dasharray="2 1"/></svg></button>
                <i class="sep"></i>
                <button aria-label="Graph"><svg class="icon" viewBox="0 0 16 16"><path d="M1 8l4-2 3 1 6-5M11 2h4v3M0 13h16" fill="none" stroke="#f0a94b" stroke-width="1.3"/><path d="M3 11.500v3M8 11.500v3M13 11.500v3" stroke="#f0a94b" stroke-width="2.5"/></svg></button>
                <i class="sep"></i>
                <button class="text"><svg class="icon" viewBox="0 0 16 16"><path d="M1 1h14v14H1z" fill="#fbb92d"/><path d="M4 3h8v10H4z" fill="#fff" stroke="#222"/><path d="M6 1.500h4v3H6z" fill="#444"/></svg>Clipboard<svg class="caret"><use href="#down"/></svg></button>
                <span class="label empty">[ Empty ]</span>
                <i class="sep"></i>
                <button class="text"><svg class="icon" viewBox="0 0 16 16"><path d="M1 6l5-4 8 2v7l-6 4-7-3zM1 6l7 2 6-4M8 8v7" fill="none" stroke="#ccc" stroke-width="1.2"/><path d="M1 7l6 2v6l-6-3z" fill="#0b0"/><circle cx="7" cy="4" r="1.500" fill="#f0a94b"/></svg>Extend<svg class="caret"><use href="#down"/></svg></button>
                <button class="text"><svg class="icon" viewBox="0 0 16 16"><path d="M8 12Q3 7 4.500 3.500a3.700 3.700 0 0 1 7 0Q13 7 8 12z" fill="#f0a94b"/><circle cx="8" cy="5" r="1.500" fill="#2d2d30"/><path d="M4 12l-3 3h14l-3-3" fill="none" stroke="#ddd" stroke-width="1.3"/></svg>Select By<svg class="caret"><use href="#down"/></svg></button>
                <button class="text"><svg class="icon" viewBox="0 0 16 16"><path d="M0 8h3" stroke="#f08a2c" stroke-width="2"/><path d="M4 4l3-2 8 1v9l-2 2-8-1z" fill="#0b0"/><path d="M4 4l8 1 3-2M12 5v9M4 4v9l8 1" stroke="#cfc" fill="none"/></svg>Convert<svg class="caret"><use href="#down"/></svg></button>
                <button class="low" aria-label="More"><svg width="8" height="5"><use href="#down"/></svg></button>
            </div>

            <!-- Graphics view -->
            <section class="viewport">
                <svg class="scene" viewBox="0 0 1431 911">
                    <defs>
                        <radialGradient id="ball" cx=".6" cy=".35" r=".7"><stop offset="0" stop-color="#1ee"/><stop offset="1" stop-color="#066"/></radialGradient>
                        <linearGradient id="red" x2="0" y2="1"><stop offset="0" stop-color="#600"/><stop offset=".5" stop-color="#d00"/><stop offset="1" stop-color="#800"/></linearGradient>
                        <linearGradient id="green"><stop offset="0" stop-color="#050"/><stop offset=".5" stop-color="#0a0"/><stop offset="1" stop-color="#040"/></linearGradient>
                    </defs>
                    <g class="beam">
                        <path stroke="#f00" d="M313 628L365 609L374 606"/>
                        <path stroke="#ffb000" d="M374 606L415 590L435 583"/>
                        <path stroke="#ff0" d="M435 583L466 572L500 559"/>
                        <path stroke="#b0ff00" d="M500 559L517 553L565 536"/>
                        <path stroke="#0f0" d="M565 536L619 517L634 512"/>
                        <path stroke="#00ffb0" d="M634 512L669 500L708 487"/>
                        <path stroke="#0ff" d="M708 487L771 466L794 458"/>
                        <path stroke="#00b0ff" d="M794 458L822 450L874 435L901 426"/>
                        <path stroke="#00f" d="M901 426L925 419L976 405L1027 392L1079 380L1130 368"/>
                    </g>
                    <path class="nodes" d="M312 628h3M365 607v4M415 589v4M466 570v4M517 551v4M568 533v4M619 515v4M669 498v4M720 481v4M771 464v4M822 448v4M874 433v4M925 417v4M976 403v4M1027 390v4M1079 378v4M1129 368h3"/>
                    <!-- scale ruler -->
                    <path d="M499 849h108v17H499zM714 849h109v17H714z" fill="#000"/>
                    <path d="M499 849.500h432v17H499z" fill="none" stroke="#eee"/>
                    <g class="ruler-text">
                        <text x="499" y="846">0.000</text><text x="714" y="846">0.100</text><text x="941" y="846">0.200 (m)</text>
                        <text x="606" y="888">0.050</text><text x="823" y="888">0.150</text>
                    </g>
                    <!-- triad -->
                    <path d="M1314 749l9 63" stroke="#0a8a0a" stroke-width="5"/>
                    <path d="M1311 728l11 20q-8 4-16 2z" fill="url(#green)"/>
                    <path d="M1323 812l52-6" stroke="#900" stroke-width="5"/>
                    <path d="M1396 803l-19-6q-5 8 1 16z" fill="url(#red)"/>
                    <path d="M1323 812l-24 5" stroke="#0000e8" stroke-width="5"/>
                    <path d="M1282 819l9-9q9 0 9 8-2 9-8 9z" fill="#0000b4"/>
                    <circle cx="1333" cy="773" r="8.500" fill="url(#ball)"/>
                    <g class="triad-text"><text x="1411" y="802" fill="#f00">X</text><text x="1312" y="716" fill="#0a0">Y</text><text x="1279" y="822" fill="#00f">Z</text></g>
                </svg>
                <div class="result-info">
                    <b>E: Static Structural</b>
                    <p>Total Deformation</p>
                    <p>Type: Total Deformation</p>
                    <p>Unit: m</p>
                    <p>Time: 1 s</p>
                    <p>2024-06-11 오전 1:52</p>
                    <div class="legend">
                        <div class="bands"><i class="c1"></i><i class="c2"></i><i class="c3"></i><i class="c4"></i><i class="c5"></i><i class="c6"></i><i class="c7"></i><i class="c8"></i><i class="c9"></i></div>
                        <div class="values"><b>0.00089292 Max</b><span>0.0007937</span><span>0.00069449</span><span>0.00059528</span><span>0.00049606</span><span>0.00039685</span><span>0.00029764</span><span>0.00019843</span><span>9.9213e-5</span><b>0 Min</b></div>
                    </div>
                </div>
                <div class="brand">
                    <div class="brand-name">Ansys</div>
                    <div class="brand-version">2024 R1</div>
                    <div class="brand-edition">STUDENT</div>
                </div>
            </section>

            <div class="bottom">
                <section class="dock">
                    <div class="dock-head"><h2>Graph</h2><i class="dots"></i><button aria-label="Menu"><svg width="8" height="5"><use href="#down"/></svg></button><button aria-label="Pin"><svg width="10" height="14"><use href="#pin"/></svg></button><button aria-label="Maximize"><svg width="12" height="12"><use href="#box"/></svg></button><button aria-label="Close"><svg width="10" height="10"><use href="#close"/></svg></button></div>
                    <div class="toolbar anim">
                        <i class="grip"></i>
                        <span class="label">Animation</span>
                        <button aria-label="First"><svg class="icon" viewBox="0 0 16 16"><path d="M2 1v14" stroke="#fff" stroke-width="2.5"/><path d="M15 1v14L4 8z" fill="#ccc"/></svg></button>
                        <button aria-label="Play"><svg class="icon" viewBox="0 0 16 16"><path d="M3 2l10 6-10 6z" fill="#f0a94b"/></svg></button>
                        <button class="on" aria-label="Stop"><svg class="icon" viewBox="0 0 16 16"><path d="M2 2h12v12H2z" fill="#e53935"/></svg></button>
                        <button aria-label="Last"><svg class="icon" viewBox="0 0 16 16"><path d="M14 1v14" stroke="#fff" stroke-width="2.5"/><path d="M1 1v14l11-7z" fill="#ccc"/></svg></button>
                        <i class="sep"></i>
                        <button class="on" aria-label="Distributed"><svg class="icon" viewBox="0 0 16 16"><path d="M1 1h14M2 1v12M6 1v12M10 1v12M14 1v12" stroke="#0a0" stroke-width="1.5"/><path d="M1 14h14" stroke="#f08a2c" stroke-width="3" stroke-dasharray="3 1"/></svg></button>
                        <button aria-label="Result sets"><svg class="icon" viewBox="0 0 16 16"><path d="M2 1v12M6 1v12M10 1v12M14 1v12" stroke="#4a90d9" stroke-width="2"/><path d="M1 14h14" stroke="#f08a2c" stroke-width="3" stroke-dasharray="3 1"/></svg></button>
                        <i class="sep"></i>
                        <div class="combo w99"><select aria-label="Frames"><option>20 Frames</option></select><svg class="caret"><use href="#down"/></svg></div>
                        <div class="combo w99"><select aria-label="Duration"><option>2 Sec (Auto)</option></select><svg class="caret"><use href="#down"/></svg></div>
                        <i class="sep"></i>
                        <button aria-label="Export video"><svg class="icon" viewBox="0 0 16 16"><path d="M1 3h14v10H1z" fill="#333" stroke="#ccc"/><path d="M1 3h14M1 13h14" stroke="#ccc" stroke-width="2.5" stroke-dasharray="2 1"/><path d="M3 9q4-5 7-1" stroke="#e33" stroke-width="2" fill="none"/><path d="M8 9h6v6H8z" fill="#2a6a96"/></svg></button>
                        <i class="sep"></i>
                        <button aria-label="Zoom to fit"><svg class="icon" viewBox="0 0 16 16"><use href="#lens"/><path d="M5 3l6 4-6 4z" fill="#f0a94b"/></svg></button>
                        <button aria-label="Update contour"><svg class="icon" viewBox="0 0 16 16"><path d="M1 1h14v5H1z" fill="#e00"/><path d="M1 6h14v5H1z" fill="#0a0"/><path d="M1 11h14v4H1z" fill="#24d"/></svg></button>
                        <button aria-label="Run"><svg class="icon" viewBox="0 0 16 16"><path d="M1 14q6-1 7-6t6-6M1 5q6-2 8 1 2 3 6 1M7 9q4 1 4 5" fill="none" stroke="#999" stroke-width="1.8"/></svg></button>
                        <button aria-label="Camera"><svg class="icon" viewBox="0 0 16 16"><path d="M4 1l11 6-2 4L2 5zM1 12l6-1" fill="#bbb" stroke="#bbb"/><path d="M5 3l8 5" stroke="#555"/><path d="M7 8v4H2" stroke="#bbb" stroke-width="1.5" fill="none"/></svg></button>
                        <i class="sep"></i>
                        <button aria-label="Key frame"><svg class="icon"><use href="#film"/></svg></button>
                        <button aria-label="Key frame options"><svg class="icon" viewBox="0 0 16 16"><use href="#film"/><circle cx="11" cy="12" r="3" fill="#444" stroke="#999"/></svg></button>
                        <i class="sep"></i>
                        <button aria-label="Cycles"><svg class="icon" viewBox="0 0 16 16"><path d="M2 1v14M5 3v10M7.500 4v8M10 5.500v5M13 7v2" stroke="#ccc" stroke-width="1.5"/><path d="M1 8h14" stroke="#ccc"/></svg></button>
                        <div class="cycles"><input type="text" value="3 Cycles" aria-label="Cycle count"></div>
                        <button class="overflow" aria-label="More"><svg width="8" height="18" viewBox="0 0 8 18"><path d="M1 1l3 3 3-3M1 5l3 3 3-3" stroke="#ccc" fill="none"/><path d="M1 13h6l-3 4z" fill="#fff"/></svg></button>
                    </div>
                    <div class="plot">
                        <svg viewBox="0 0 713 226">
                            <path d="M52 24.500h637M689.500 24v140M52 157.500h637M44 24.500h8M44 38.500h8M44 51.500h8M44 64.500h8M44 78.500h8M44 91.500h8M44 104.500h8M44 118.500h8M44 131.500h8M44 144.500h8M44 157.500h8M51.500 158v7M115.500 158v7M179.500 158v7M242.500 158v7M306.500 158v7M370.500 158v7M433.500 158v7M497.500 158v7M561.500 158v7M625.500 158v7" fill="none" stroke="#b0b0b0"/>
                            <path d="M51.500 200.500h638v14h-638z" fill="none" stroke="#999"/>
                            <path d="M51.500 24v133" stroke="#fff"/>
                            <path d="M50 23h3v3h-3z" fill="#080"/><path d="M50 105h3v3h-3z" fill="#00c"/><path d="M50 156h3v3h-3z" fill="#c00"/>
                            <text x="371" y="189">[s]</text>
                            <text x="0" y="0" transform="translate(35 88) rotate(-90)">[m]</text>
                        </svg>
                    </div>
                    <nav class="dock-tabs"><a href="#">Messages</a><a href="#" class="active">Graph</a></nav>
                </section>
                <section class="dock">
                    <div class="dock-head"><h2>Tabular Data</h2><i class="dots"></i><button aria-label="Menu"><svg width="8" height="5"><use href="#down"/></svg></button><button aria-label="Pin"><svg width="10" height="14"><use href="#pin"/></svg></button><button aria-label="Maximize"><svg width="12" height="12"><use href="#box"/></svg></button><button aria-label="Close"><svg width="10" height="10"><use href="#close"/></svg></button></div>
                    <div class="tabular-body">
                        <table class="tabular">
                            <tr><th class="num"></th><th class="time">Time [s]</th><th class="min"><label><input type="checkbox" checked>Minimum [m]</label></th><th class="max"><label><input type="checkbox" checked>Maximum [m]</label></th><th class="avg"><label><input type="checkbox" checked>Average [m]</label></th></tr>
                            <tr><th class="num">1</th><td>1.</td><td>0.</td><td>8.9292e-004</td><td>3.451e-004</td></tr>
                        </table>
                    </div>
                </section>
            </div>
        </div>
    </main>

    <!-- Status bar -->
    <footer class="status">
        <button><svg width="16" height="16" viewBox="0 0 16 16"><path d="M1 4h12v7H7l-3 4v-4H1z" fill="#f3c623"/><path d="M8 8V3a2 2 0 0 1 5 0v5a1 1 0 0 1-3 0V4" fill="none" stroke="#111"/></svg>No Messages</button>
        <span>No Selection</span>
        <button class="units"><svg width="8" height="6" viewBox="0 0 8 6"><path d="M4 0l4 6H0z" fill="#fff"/></svg>Metric (m, kg, N, s, V, A)</button>
        <span>Degrees</span>
        <span>rad/s</span>
        <span>Celsius</span>
        <i class="resize"></i>
    </footer>

</body>
</html>
```
FILE: styles.css
```css
/* General Styles */
* {
    box-sizing: border-box;
}

body {
    margin: 0;
    height: 100vh;
    display: flex;
    flex-direction: column;
    border: 1px solid #3c3c3c;
    border-bottom: 0;
    background-color: #292c32;
    color: #f0f0f0;
    font-family: "Open Sans", "Noto Sans", "Noto Sans CJK KR", sans-serif;
    font-size: 11px;
    line-height: 16px;
    overflow: hidden;
}

button,
input,
select {
    font: inherit;
    color: inherit;
    margin: 0;
}

button {
    background: none;
    border: 0;
    padding: 0;
    display: flex;
    align-items: center;
    justify-content: center;
    white-space: nowrap;
    flex-shrink: 0;
}

a {
    color: inherit;
    text-decoration: none;
}

svg {
    flex-shrink: 0;
}

p {
    margin: 0;
}

.defs {
    position: absolute;
    width: 0;
    height: 0;
}

.icon {
    width: 16px;
    height: 16px;
}

.caret {
    width: 6px;
    height: 4px;
    color: #999;
}

/* Title bar */
.titlebar {
    display: flex;
    align-items: center;
    height: 26px;
    background-color: #0b4095;
}

.app-icon {
    width: 16px;
    height: 16px;
    margin: 0 7px 4px 8px;
}

.save {
    padding: 0 7px 2px 5px;
    height: 24px;
    border-left: 1px solid #26374f;
}

.customize {
    padding-bottom: 4px;
}

.context {
    width: 58px;
    height: 26px;
    margin-left: 56px;
    border-top: 4px solid #5678b4;
    background-color: #d5dff1;
    color: #4373b8;
    line-height: 20px;
    text-align: center;
}

.title {
    flex: 1;
    padding-left: 5px;
}

.window-buttons {
    display: flex;
    padding-right: 12px;
    gap: 24px;
}

/* Tabs */
.tabs {
    display: flex;
    height: 23px;
    background-color: #0b4095;
    line-height: 24px;
    border-bottom: 1px solid #26374f;
}

.tabs a {
    padding: 0 15px 0 14px;
    text-align: center;
}

.tabs .file {
    width: 56px;
    background-color: #2b4bdb;
}

.tabs .home {
    width: 68px;
    padding: 0 12px 0 17px;
}

.tabs .active {
    width: 59px;
    height: 23px;
    background-color: #212121;
}

.quick {
    display: flex;
    align-items: center;
    margin-left: auto;
    padding-right: 3px;
}

.quick button {
    margin-left: 2px;
}

.quick button + button {
    margin-left: 7px;
}

.quick input {
    width: 160px;
    height: 21px;
    padding: 0 3px;
    background-color: #212121;
    border: 1px solid #3f3f46;
}

.help-mark {
    font-size: 12px;
    font-weight: 700;
    fill: #123;
}

::placeholder {
    color: #6b6b6b;
    opacity: 1;
}

/* Ribbon */
.ribbon {
    display: flex;
    height: 87px;
    padding-top: 4px;
    background-color: #212121;
}

.group {
    height: 76px;
    border-right: 1px solid #333;
}

.group-body {
    display: flex;
    height: 63px;
}

.g-outline {
    padding: 0 7px 0 4px;
}

.g-display {
    padding: 0 4px 0 5px;
    gap: 1px;
}

.g-vector {
    padding-left: 2px;
}

.g-capped {
    padding: 0 12px 0 9px;
}

.g-views {
    padding: 0 4px;
}

.group-name {
    display: flex;
    justify-content: center;
    align-items: center;
    line-height: 13px;
    color: #848484;
}

.launcher {
    width: 8px;
    height: 8px;
    margin-top: 4px;
}

.big {
    flex-direction: column;
    justify-content: flex-start;
    padding-top: 3px;
    line-height: 12px;
}

.big span {
    margin: 5px 0 4px;
}

.big.on,
.toolbar .on {
    background-color: #2d2d30;
    border: 1px solid #3399ff;
}

.big.on {
    padding-top: 2px;
}

.off,
.small:disabled {
    color: #5f5f5f;
}

.tall {
    display: flex;
    flex-direction: column;
    gap: 12px;
    padding-top: 9px;
}

.col {
    display: flex;
    flex-direction: column;
}

.small {
    height: 21px;
    justify-content: flex-start;
    gap: 2px;
}

.inner-sep {
    width: 1px;
    margin: 0 5px 0 0;
    background-color: #444;
}

.w41 { width: 41px; }
.w42 { width: 42px; }
.w43 { width: 43px; }
.w48 { width: 48px; }
.w50 { width: 50px; }
.w52 { width: 52px; }
.w54 { width: 54px; }
.w56 { width: 56px; }
.w60 { width: 60px; }
.w74 { width: 74px; }
.w80 { width: 80px; }
.w82 { width: 82px; }
.w92 { width: 92px; }
.w94 { width: 94px; }
.w99 { width: 99px; }
.w100 { width: 100px; }
.w108 { width: 108px; }
.w120 { width: 120px; }
.w140 { width: 140px; }

.tag-text {
    font-size: 7px;
    font-weight: 700;
    fill: #222;
}

.tag-text.tiny {
    font-size: 5px;
}

/* Drop-downs and inputs */
.combo {
    position: relative;
    flex-shrink: 0;
    height: 21px;
}

.combo select {
    appearance: none;
    width: 100%;
    height: 100%;
    padding: 0 16px 0 3px;
    border: 1px solid #3f3f46;
    border-radius: 0;
    background: linear-gradient(#333337, #333337) right / 14px 100% no-repeat #212121;
}

.combo .caret {
    position: absolute;
    right: 5px;
    top: 9px;
}

.check {
    display: flex;
    align-items: center;
    height: 21px;
    gap: 6px;
    white-space: nowrap;
}

.w140 .check {
    padding-left: 3px;
}

input[type="checkbox"] {
    appearance: none;
    flex-shrink: 0;
    width: 13px;
    height: 13px;
    border: 1px solid #999;
    display: grid;
    place-items: center;
}

input[type="checkbox"]:checked::before {
    content: "";
    width: 3px;
    height: 6px;
    margin-bottom: 2px;
    border: solid #bbb;
    border-width: 0 2px 2px 0;
    transform: rotate(40deg);
}

input[type="range"] {
    appearance: none;
    width: 86px;
    height: 18px;
    margin-left: 4px;
    background: none;
}

input[type="range"]::-webkit-slider-runnable-track {
    height: 4px;
    border-top: 1px solid #888;
    background-color: #fff;
}

input[type="range"]::-webkit-slider-thumb {
    appearance: none;
    width: 5px;
    height: 11px;
    margin-top: -5px;
    background-color: #e8e8e8;
    border-right: 1px solid #888;
}

.iso-value {
    width: 84px;
    height: 21px;
    padding: 3px 2px;
    border: 2px solid #3f3f46;
}

.iso-value input {
    display: block;
    width: 78px;
    height: 15px;
    margin-top: -1px;
    padding: 0;
    border: 0;
    border-bottom: 2px solid #f0f0f0;
    background: linear-gradient(#f0f0f0, #f0f0f0) 6px 0 no-repeat #212121;
    color: #777;
}

.iso-range {
    margin-left: 6px;
}

/* Workspace */
.workspace {
    flex: 1;
    display: flex;
    min-height: 0;
}

.left {
    width: 287px;
    padding: 1px 4px 0 0;
    display: flex;
    flex-direction: column;
    flex-shrink: 0;
}

.right {
    flex: 1;
    display: flex;
    flex-direction: column;
    min-width: 0;
}

.dock {
    display: flex;
    flex-direction: column;
    min-width: 0;
}

.tree-dock {
    flex: 1;
    min-height: 0;
}

.dock-head {
    display: flex;
    align-items: center;
    height: 20px;
    padding: 0 7px 2px 5px;
    gap: 6px;
    border-top: 1px solid #3a3d42;
    border-right: 1px solid #3a3d42;
    font-size: 12px;
}

.dock-head h2 {
    margin: 0;
    font-size: 12px;
    font-weight: 400;
    white-space: nowrap;
}

.dots {
    flex: 1;
    height: 6px;
    background: radial-gradient(#50535a 1px, transparent 1px) 0 0 / 4px 3px;
}

.grip {
    width: 6px;
    height: 16px;
    flex-shrink: 0;
    background: radial-gradient(#50535a 1px, transparent 1px) 0 0 / 3px 4px;
}

/* Outline tree */
.filter {
    display: flex;
    align-items: center;
    height: 27px;
    padding-left: 10px;
    background-color: #2d2d30;
    font-size: 12px;
}

.filter .combo {
    height: 23px;
    margin-left: 6px;
}

.filter input {
    width: 90px;
    height: 23px;
    margin: 0 5px 0 1px;
    padding: 0 3px;
    border: 1px solid #3f3f46;
    background-color: #212121;
}

.low {
    align-self: flex-end;
    padding: 0 0 6px 6px;
}

.tree {
    flex: 1;
    background-color: #212121;
    font-family: "DejaVu Sans Condensed", "DejaVu Sans", sans-serif;
    font-size: 11px;
    line-height: 16px;
}

.tree ul {
    margin: 0;
    padding: 0 0 0 27px;
    list-style: none;
}

.tree .root {
    padding-left: 8px;
}

.tree li {
    position: relative;
}

.tree li::before {
    content: "";
    position: absolute;
    left: 4px;
    top: 0;
    height: 100%;
    border-left: 1px dotted #bbb;
}

.tree li:last-child::before {
    height: 8px;
}

.project,
.row {
    display: flex;
    align-items: center;
    height: 16px;
    white-space: nowrap;
}

.project {
    padding-left: 9px;
    gap: 6px;
}

.row.bold {
    font-weight: 700;
}

.exp {
    position: relative;
    width: 9px;
    height: 9px;
    flex-shrink: 0;
}

.minus,
.plus {
    border: 1px solid #ddd;
    background: linear-gradient(#fff, #fff) center / 5px 1px no-repeat #212121;
}

.plus {
    background: linear-gradient(#fff, #fff) center / 5px 1px no-repeat, linear-gradient(#fff, #fff) center / 1px 5px no-repeat #212121;
}

.row .exp {
    margin-right: 10px;
}

.row .exp::after {
    content: "";
    position: absolute;
    left: 9px;
    top: 3px;
    width: 9px;
    border-top: 1px dotted #bbb;
}

.row.leaf .exp::after {
    left: 5px;
    top: 4px;
    width: 14px;
}

.state {
    width: 8px;
    height: 8px;
    margin: 4px 1px 0 0;
    flex-shrink: 0;
}

.ti {
    width: 14px;
    height: 14px;
    margin-right: 5px;
}

.selected {
    margin-left: -1px;
    padding: 0 2px 0 1px;
    background-color: #f0f0f0;
    color: #000;
}

/* Details */
.details-dock {
    height: 475px;
    margin-top: 3px;
    background-color: #212121;
}

.details-dock .dock-head {
    height: 21px;
    padding-bottom: 0;
    background-color: #292c32;
}

.details {
    width: 100%;
    border-collapse: collapse;
    table-layout: fixed;
}

.details tr {
    height: 18px;
}

.details td,
.details th {
    padding: 0 3px 3px;
    height: 18px;
    line-height: 14px;
    border: 1px solid #999;
    font-weight: 400;
    text-align: left;
    white-space: nowrap;
}

.details td {
    color: #dcdcdc;
}

.details th {
    font-weight: 700;
}

.c-gut {
    width: 13px;
}

.c-name {
    width: 129px;
}

.details .gut {
    padding: 0 0 0 2px;
    border-width: 0 1px 0 0;
}

.details .gut .exp {
    display: block;
}

.details .ro {
    background-color: #465963;
}

.details label {
    display: flex;
    align-items: center;
    gap: 4px;
}

.details input {
    width: 12px;
    height: 12px;
    background-color: #fff;
}

.dock-tabs {
    display: flex;
    height: 18px;
    flex-shrink: 0;
    font-size: 12px;
    line-height: 16px;
    color: #dcdcdc;
}

.dock-tabs a {
    padding: 0 5px;
}

.dock-tabs .active {
    padding: 0 4px;
    background-color: #212121;
    border: 1px solid #3a3d42;
    border-top: 0;
    color: #0097fb;
}

/* Graphics toolbar */
.toolbar {
    display: flex;
    align-items: center;
    height: 27px;
    flex-shrink: 0;
    padding-left: 10px;
    background-color: #2d2d30;
    font-size: 12px;
}

.toolbar button {
    width: 22px;
    height: 22px;
}

.toolbar .grip {
    margin-right: 6px;
}

.toolbar .wide {
    width: 33px;
    gap: 5px;
}

.toolbar .text {
    width: auto;
    gap: 1px;
    margin: 0 7px 0 4px;
}

.toolbar .low {
    width: 8px;
    height: 12px;
    padding: 0;
}

.toolbar .label {
    margin: 0 2px 0 4px;
}

.toolbar .empty {
    margin: 0 5px 0 2px;
}

.sep {
    width: 1px;
    height: 20px;
    margin: 0 2px 0 3px;
    background-color: #46464a;
    flex-shrink: 0;
}

/* Graphics view */
.viewport {
    position: relative;
    flex: 1;
    min-height: 0;
    background: linear-gradient(#212121, #626262);
    font-size: 12px;
}

.scene {
    display: block;
    width: 100%;
    height: 100%;
}

.beam path {
    fill: none;
    stroke-width: 5;
}

.nodes {
    stroke: #000;
    stroke-width: 2;
}

.ruler-text,
.triad-text {
    fill: #f0f0f0;
    text-anchor: middle;
}

.result-info {
    position: absolute;
    left: 15px;
    top: 14px;
    line-height: 15px;
}

.legend {
    display: flex;
    gap: 8px;
    margin-top: 14px;
}

.bands {
    display: flex;
    flex-direction: column;
    width: 16px;
    height: 153px;
    margin-top: 7px;
    border: 1px solid #bbb;
    border-top: 2px solid #ddd;
}

.bands i {
    flex: 1;
    border-bottom: 1px solid #ccc;
}

.c1 { background-color: #ff0000; }
.c2 { background-color: #ffb000; }
.c3 { background-color: #ffff00; }
.c4 { background-color: #b0ff00; }
.c5 { background-color: #00ff00; }
.c6 { background-color: #00ffb0; }
.c7 { background-color: #00ffff; }
.c8 { background-color: #00b0ff; }
.c9 { background-color: #0000ff; }

.values {
    display: flex;
    flex-direction: column;
    justify-content: space-between;
    height: 165px;
}

.brand {
    position: absolute;
    right: 8px;
    top: 0;
    width: 110px;
    color: #fff;
    font-weight: 800;
}

.brand-name {
    font-size: 37px;
    line-height: 46px;
    text-align: right;
}

.brand-version {
    padding-bottom: 4px;
    border-bottom: 2px solid #aaa;
    font-size: 17px;
    font-weight: 700;
    line-height: 16px;
    text-align: right;
}

.brand-edition {
    padding: 4px 6px 0 0;
    font-size: 19px;
    line-height: 20px;
    text-align: center;
}

/* Bottom docks */
.bottom {
    display: grid;
    grid-template-columns: 1fr 1fr;
    gap: 4px;
    height: 296px;
    padding: 4px 1px 0 0;
    flex-shrink: 0;
}

.anim .combo {
    height: 23px;
}

.anim .label {
    margin: 0 1px 0 5px;
}

.cycles {
    width: 58px;
    height: 23px;
    flex-shrink: 0;
    margin-left: 2px;
    padding: 3px 2px;
    border: 1px solid #3f3f46;
}

.cycles input {
    display: block;
    width: 52px;
    height: 17px;
    padding: 0;
    border: 0;
    border-bottom: 2px solid #f0f0f0;
    background: linear-gradient(#f0f0f0, #f0f0f0) right / 8px 100% no-repeat #2d2d30;
    color: #777;
}

.toolbar .overflow {
    margin-left: 6px;
}

.plot {
    flex: 1;
    min-height: 0;
    background-color: #9e9e9e;
}

.plot svg {
    display: block;
    width: 100%;
    height: 100%;
}

.plot text {
    font-size: 12px;
    font-weight: 600;
    text-anchor: middle;
    fill: #000;
}

/* Tabular data */
.tabular-body {
    flex: 1;
    background-color: #212121;
}

.tabular {
    border-collapse: collapse;
    color: #f0f0f0;
}

.tabular th,
.tabular td {
    border: 1px solid #ddd;
    padding: 0 4px;
    height: 16px;
    line-height: 14px;
    background-color: #626262;
    font-weight: 400;
    text-align: left;
    white-space: nowrap;
}

.tabular th {
    background-color: #9e9e9e;
    color: #111;
}

.tabular .num {
    width: 17px;
}

.tabular .time {
    width: 52px;
}

.tabular .min {
    width: 100px;
    color: #b00000;
}

.tabular .max {
    width: 102px;
    color: #008000;
}

.tabular .avg {
    width: 93px;
    color: #0000c8;
}

.tabular label {
    display: flex;
    align-items: center;
    gap: 4px;
}

.tabular input[type="checkbox"] {
    width: 14px;
    height: 14px;
    background-color: #fff;
}

.tabular input[type="checkbox"]:checked::before {
    border-color: #000;
}

/* Status bar */
.status {
    display: flex;
    align-items: center;
    justify-content: flex-end;
    gap: 16px;
    height: 21px;
    flex-shrink: 0;
    padding-right: 2px;
    background-color: #404040;
    font-size: 12px;
}

.status .units {
    gap: 6px;
    margin-left: 4px;
}

.resize {
    width: 8px;
    height: 8px;
    align-self: flex-end;
    background: radial-gradient(#999 1px, transparent 1px) 0 0 / 3px 3px;
    clip-path: polygon(100% 0, 100% 100%, 0 100%);
}
```
